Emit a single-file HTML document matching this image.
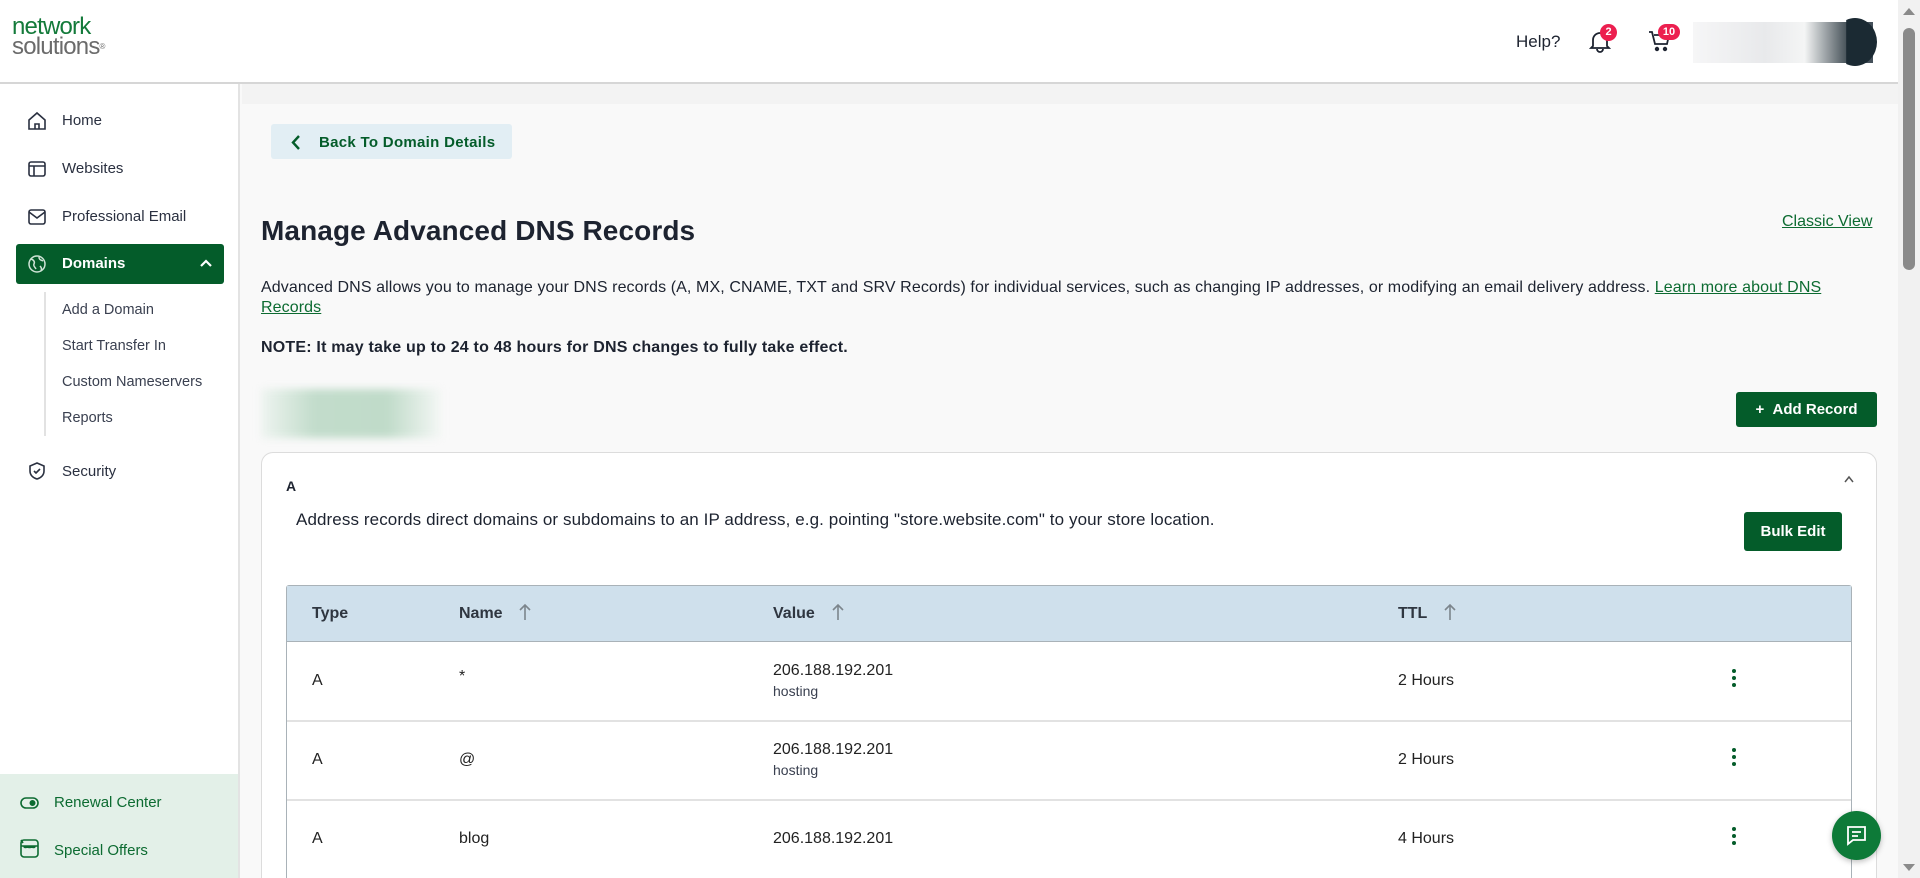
<!DOCTYPE html>
<html style="width:1920px;height:878px;overflow:hidden"><head><meta charset="utf-8"><style>
*{box-sizing:border-box;margin:0;padding:0}
body{width:1920px;height:878px;overflow:hidden;font-family:"Liberation Sans",Arial,sans-serif;color:#1d2330;background:#f9f9f9;position:relative}
.abs{position:absolute}
#hdr{left:0;top:0;width:1898px;height:84px;background:#fff;border-bottom:2px solid #d6d6d6}
#side{left:0;top:84px;width:240px;height:794px;background:#fff;border-right:2px solid #e3e3e3}
.nav{position:absolute;left:62px;font-size:15px;color:#2a3040}
.ico{position:absolute;left:27px;width:20px;height:20px}
.sub{position:absolute;left:62px;font-size:14.5px;color:#3a4050}
#band{left:242px;top:84px;width:1656px;height:20px;background:#f3f3f3}
.btn{position:absolute;background:#045c2a;color:#fff;font-weight:bold;font-size:15px;border-radius:3px;display:flex;align-items:center;justify-content:center}
.cell{position:absolute;font-size:16px;color:#222}
</style></head><body>
<div id="hdr" class="abs">
  <div class="abs" style="left:12px;top:17px;font-size:24px;line-height:20px;letter-spacing:-0.8px">
    <div style="color:#137a3a">network</div>
    <div style="color:#6b6b6b">solutions<span style="font-size:8px;vertical-align:top">®</span></div>
  </div>
  <div class="abs" style="left:1516px;top:32px;font-size:17px;color:#1d2330">Help?</div>
  <svg class="abs" style="left:1589px;top:29px" width="22" height="24" viewBox="0 0 22 24" fill="none" stroke="#1d2330" stroke-width="1.8"><path d="M4 17V11a7 7 0 0 1 14 0v6l2 2H2z"/><path d="M8 20a3 3 0 0 0 6 0"/></svg>
  <div class="abs" style="left:1600px;top:24px;width:17px;height:17px;border-radius:50%;background:#ec1f4f;color:#fff;font-size:11px;font-weight:bold;text-align:center;line-height:17px">2</div>
  <svg class="abs" style="left:1648px;top:30px" width="24" height="22" viewBox="0 0 24 22" fill="none" stroke="#1d2330" stroke-width="1.8"><path d="M1 2h3l3 12h12l2-9H6"/><circle cx="9" cy="19" r="1.3" fill="#1d2330"/><circle cx="17" cy="19" r="1.3" fill="#1d2330"/></svg>
  <div class="abs" style="left:1658px;top:24px;width:22px;height:16px;border-radius:8px;background:#ec1f4f;color:#fff;font-size:11px;font-weight:bold;text-align:center;line-height:16px">10</div>
  <div class="abs" style="left:1693px;top:22px;width:180px;height:41px;background:linear-gradient(90deg,#f6f6f7,#e8e9eb 40%,#f4f5f5 62%,#4a555c 85%,#44505a)"></div>
  <div class="abs" style="left:1833px;top:18px;width:44px;height:48px;border-radius:50%;background:#1b2a33;clip-path:inset(0 0 0 30%)"></div>
</div>
<div id="side" class="abs">
  <svg class="ico" style="top:27px" viewBox="0 0 20 20" fill="none" stroke="#2a3040" stroke-width="1.6"><path d="M2 9l8-7 8 7v9H2z"/><path d="M8 18v-5h4v5"/></svg>
  <div class="nav" style="top:28px">Home</div>
  <svg class="ico" style="top:75px" viewBox="0 0 20 20" fill="none" stroke="#2a3040" stroke-width="1.6"><rect x="2" y="3" width="16" height="14" rx="2"/><path d="M2 7h16M7 7v10"/></svg>
  <div class="nav" style="top:76px">Websites</div>
  <svg class="ico" style="top:123px" viewBox="0 0 20 20" fill="none" stroke="#2a3040" stroke-width="1.6"><rect x="2" y="3" width="16" height="14" rx="2"/><path d="M2 5l8 6 8-6"/></svg>
  <div class="nav" style="top:124px">Professional Email</div>
  <div class="abs" style="left:16px;top:160px;width:208px;height:40px;background:#045c2a;border-radius:3px"></div>
  <svg class="ico" style="top:170px" viewBox="0 0 20 20" fill="none" stroke="#cfe3d6" stroke-width="1.5"><circle cx="10" cy="10" r="8"/><path d="M4 5c3 1 4 3 3 5s1 3 2 5M12 3c0 3 2 3 4 4M13 12c1 1 2 3 1 5"/></svg>
  <div class="nav" style="top:171px;color:#fff;font-weight:bold">Domains</div>
  <svg class="abs" style="left:199px;top:174px" width="14" height="10" viewBox="0 0 14 10" fill="none" stroke="#fff" stroke-width="2.2"><path d="M2 8l5-5 5 5"/></svg>
  <div class="abs" style="left:44px;top:208px;width:2px;height:144px;background:#e2e2e2"></div>
  <div class="sub" style="top:218px">Add a Domain</div>
  <div class="sub" style="top:254px">Start Transfer In</div>
  <div class="sub" style="top:290px">Custom Nameservers</div>
  <div class="sub" style="top:326px">Reports</div>
  <svg class="ico" style="top:377px" viewBox="0 0 20 20" fill="none" stroke="#2a3040" stroke-width="1.6"><path d="M10 2l7 3v5c0 4-3 7-7 8-4-1-7-4-7-8V5z"/><path d="M7 10l2 2 4-4"/></svg>
  <div class="nav" style="top:379px">Security</div>
  <div class="abs" style="left:0;top:690px;width:238px;height:104px;background:#e3f0e8"></div>
  <svg class="abs" style="left:20px;top:713px" width="19" height="12" viewBox="0 0 19 12" fill="none" stroke="#0c6b31" stroke-width="1.6"><rect x="1" y="1" width="17" height="10" rx="5"/><circle cx="12.5" cy="6" r="2.2" fill="#0c6b31"/></svg>
  <div class="nav" style="left:54px;top:710px;color:#0c6b31">Renewal Center</div>
  <svg class="abs" style="left:20px;top:755px" width="19" height="19" viewBox="0 0 19 19" fill="none" stroke="#0c6b31" stroke-width="1.6"><rect x="1" y="1" width="17" height="17" rx="3"/><path d="M1 7h17M4 7c0 2 3 2 3 0 0 2 5 2 5 0 0 2 3 2 3 0M1 1l2 3"/></svg>
  <div class="nav" style="left:54px;top:758px;color:#0c6b31">Special Offers</div>
</div>
<div id="band" class="abs"></div>
<div class="abs" style="left:271px;top:124px;width:241px;height:35px;background:#e2eef4;border-radius:3px"></div>
<svg class="abs" style="left:290px;top:134px" width="12" height="17" viewBox="0 0 12 17" fill="none" stroke="#045c2a" stroke-width="2.4"><path d="M9 2L3 8.5 9 15"/></svg>
<div class="abs" style="left:319px;top:134px;font-size:15px;font-weight:bold;color:#045c2a;letter-spacing:0.3px">Back To Domain Details</div>
<div class="abs" style="left:261px;top:215px;font-size:28px;font-weight:bold;color:#1d2330;letter-spacing:0.1px">Manage Advanced DNS Records</div>
<div class="abs" style="left:1782px;top:213px;font-size:16px;color:#0c6b31;text-decoration:underline">Classic View</div>
<div class="abs" style="left:261px;top:278px;width:1615px;font-size:16px;line-height:20px;color:#1d2330;letter-spacing:0.1px">Advanced DNS allows you to manage your DNS records (A, MX, CNAME, TXT and SRV Records) for individual services, such as changing IP addresses, or modifying an email delivery address. <span style="color:#0c6b31;text-decoration:underline">Learn more about DNS Records</span></div>
<div class="abs" style="left:261px;top:339px;font-size:16px;font-weight:bold;color:#1d2330;letter-spacing:0.2px">NOTE: It may take up to 24 to 48 hours for DNS changes to fully take effect.</div>
<div class="abs" style="left:261px;top:389px;width:180px;height:49px;background:linear-gradient(90deg,#eef4f0,#c2dccb 30%,#c0dbc9 70%,#f4f7f5);filter:blur(4px)"></div>
<div class="btn" style="left:1736px;top:392px;width:141px;height:35px">+&nbsp;&nbsp;Add Record</div>
<div class="abs" style="left:261px;top:452px;width:1616px;height:426px;background:#fff;border:1.5px solid #dcdcdc;border-bottom:none;border-radius:12px 12px 0 0"></div>
<div class="abs" style="left:286px;top:478px;font-size:14px;font-weight:bold">A</div>
<svg class="abs" style="left:1843px;top:475px" width="12" height="9" viewBox="0 0 12 9" fill="none" stroke="#555" stroke-width="1.5"><path d="M2 7l4-5 4 5"/></svg>
<div class="abs" style="left:296px;top:510px;font-size:17px;letter-spacing:0.1px;color:#1d2330">Address records direct domains or subdomains to an IP address, e.g. pointing "store.website.com" to your store location.</div>
<div class="btn" style="left:1744px;top:512px;width:98px;height:39px">Bulk Edit</div>
<div class="abs" style="left:286px;top:585px;width:1566px;height:293px;border:1.5px solid #a9b2b8;border-bottom:none;border-radius:3px 3px 0 0"></div>
<div class="abs" style="left:287px;top:586px;width:1564px;height:56px;background:#cfe0ec;border-bottom:1.5px solid #a9b2b8"></div>
<div class="cell" style="left:312px;top:605px;font-weight:bold;color:#2f3640">Type</div>
<div class="cell" style="left:459px;top:605px;font-weight:bold;color:#2f3640">Name</div>
<div class="cell" style="left:773px;top:605px;font-weight:bold;color:#2f3640">Value</div>
<div class="cell" style="left:1398px;top:605px;font-weight:bold;color:#2f3640">TTL</div>
<svg class="abs" style="left:518px;top:603px" width="14" height="18" viewBox="0 0 14 18" fill="none" stroke="#7c858c" stroke-width="1.6"><path d="M7 17V2M2 7l5-5 5 5"/></svg>
<svg class="abs" style="left:831px;top:603px" width="14" height="18" viewBox="0 0 14 18" fill="none" stroke="#7c858c" stroke-width="1.6"><path d="M7 17V2M2 7l5-5 5 5"/></svg>
<svg class="abs" style="left:1443px;top:603px" width="14" height="18" viewBox="0 0 14 18" fill="none" stroke="#7c858c" stroke-width="1.6"><path d="M7 17V2M2 7l5-5 5 5"/></svg>
<div class="abs" style="left:287px;top:720px;width:1564px;height:1.5px;background:#e2e2e2"></div>
<div class="abs" style="left:287px;top:799px;width:1564px;height:1.5px;background:#e2e2e2"></div>
<div class="cell" style="left:312px;top:672px">A</div>
<div class="cell" style="left:459px;top:668px">*</div>
<div class="cell" style="left:773px;top:662px">206.188.192.201</div>
<div class="cell" style="left:773px;top:683px;font-size:14px;color:#3a4050">hosting</div>
<div class="cell" style="left:1398px;top:672px">2 Hours</div>
<div class="cell" style="left:312px;top:751px">A</div>
<div class="cell" style="left:459px;top:751px">@</div>
<div class="cell" style="left:773px;top:741px">206.188.192.201</div>
<div class="cell" style="left:773px;top:762px;font-size:14px;color:#3a4050">hosting</div>
<div class="cell" style="left:1398px;top:751px">2 Hours</div>
<div class="cell" style="left:312px;top:830px">A</div>
<div class="cell" style="left:459px;top:830px">blog</div>
<div class="cell" style="left:773px;top:830px">206.188.192.201</div>
<div class="cell" style="left:1398px;top:830px">4 Hours</div>
<svg class="abs" style="left:1731px;top:668px" width="6" height="20" viewBox="0 0 6 20" fill="#045c2a"><circle cx="3" cy="3" r="2"/><circle cx="3" cy="10" r="2"/><circle cx="3" cy="17" r="2"/></svg>
<svg class="abs" style="left:1731px;top:747px" width="6" height="20" viewBox="0 0 6 20" fill="#045c2a"><circle cx="3" cy="3" r="2"/><circle cx="3" cy="10" r="2"/><circle cx="3" cy="17" r="2"/></svg>
<svg class="abs" style="left:1731px;top:826px" width="6" height="20" viewBox="0 0 6 20" fill="#045c2a"><circle cx="3" cy="3" r="2"/><circle cx="3" cy="10" r="2"/><circle cx="3" cy="17" r="2"/></svg>
<div class="abs" style="left:1832px;top:811px;width:49px;height:49px;border-radius:50%;background:#0d7a38;box-shadow:0 2px 6px rgba(0,0,0,.25)"></div>
<svg class="abs" style="left:1845px;top:824px" width="23" height="23" viewBox="0 0 23 23" fill="none" stroke="#fff" stroke-width="1.8"><path d="M3 3h17v13H8l-5 4z"/><path d="M7 8h9M7 12h6"/></svg>
<div class="abs" style="left:1898px;top:0;width:22px;height:878px;background:#f1f1f1"></div>
<div class="abs" style="left:1903px;top:28px;width:12px;height:242px;border-radius:6px;background:#8a8a8a"></div>
<svg class="abs" style="left:1902px;top:7px" width="14" height="9" viewBox="0 0 14 9"><path d="M1 8L7 1l6 7z" fill="#8a8a8a"/></svg>
<svg class="abs" style="left:1902px;top:863px" width="14" height="9" viewBox="0 0 14 9"><path d="M1 1l6 7 6-7z" fill="#8a8a8a"/></svg>
</body></html>
